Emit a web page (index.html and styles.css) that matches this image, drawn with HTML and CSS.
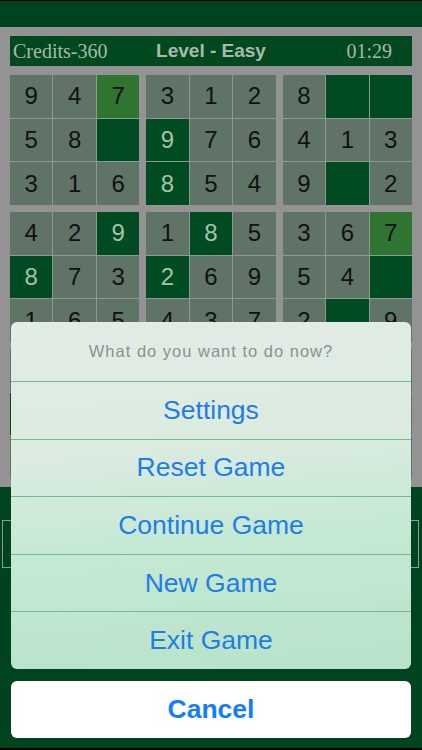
FILE: index.html
```html
<!DOCTYPE html>
<html lang="en">
<head>
  <meta charset="UTF-8">
  <meta name="viewport" content="width=device-width, initial-scale=1.0">
  <title>Sudoku</title>
  <link rel="stylesheet" href="styles.css">
</head>
<body>
  <div class="topbar"></div>

  <div class="board-area">
    <div class="status">
      <span class="credits">Credits-360</span>
      <span class="level">Level - Easy</span>
      <span class="timer">01:29</span>
    </div>
    <!-- Blocks are filled in by the script below -->
    <div class="board" id="board"></div>
  </div>

  <div class="controls">
    <div class="ctrl-btn"></div>
    <div class="ctrl-btn"></div>
  </div>

  <!-- Action sheet over the dimmed game -->
  <div class="sheet-wrap">
    <div class="sheet">
      <div class="sheet-title">What do you want to do now?</div>
      <button class="sheet-option">Settings</button>
      <button class="sheet-option">Reset Game</button>
      <button class="sheet-option">Continue Game</button>
      <button class="sheet-option">New Game</button>
      <button class="sheet-option">Exit Game</button>
    </div>
    <button class="sheet-cancel">Cancel</button>
  </div>

  <script>
    // 'g' = highlighted cell, 'd' = given (dark) cell
    // last row of blocks sits under the sheet, so it stays blank
    const blocks = [
      ['9', '4', 'g7', '5', '8', 'd', '3', '1', '6'],
      ['3', '1', '2', 'd9', '7', '6', 'd8', '5', '4'],
      ['8', 'd', 'd', '4', '1', '3', '9', 'd', '2'],
      ['4', '2', 'd9', 'd8', '7', '3', '1', '6', '5'],
      ['1', 'd8', '5', 'd2', '6', '9', '4', '3', '7'],
      ['3', '6', 'g7', '5', '4', 'd', '2', 'd', '9'],
      ['', '', '', 'd', '', '', '', '', ''],
      ['', '', '', '', 'd', '', '', '', ''],
      ['', '', '', '', '', '', 'd', '', '']
    ];

    const board = document.getElementById('board');
    blocks.forEach(cells => {
      const block = document.createElement('div');
      block.classList.add('block');
      cells.forEach(value => {
        const cell = document.createElement('div');
        cell.classList.add('cell');
        if (value[0] === 'g') cell.classList.add('highlight');
        if (value[0] === 'd') cell.classList.add('given');
        cell.textContent = value.replace(/[gd]/, '');
        block.appendChild(cell);
      });
      board.appendChild(block);
    });
  </script>
</body>
</html>
```

FILE: styles.css
```css
body {
  margin: 0;
  height: 750px;
  box-sizing: border-box;
  background-color: #00431f;
  border-top: 1px solid #000;
  border-bottom: 2px solid #000;
  font-family: "Liberation Sans", Arial, sans-serif;
  overflow: hidden;
  position: relative;
}

.topbar {
  height: 26px;
  background-color: #00431f;
}

.board-area {
  background-color: #939393;
  padding: 9px 10px 8px;
}

/* Credits / level / timer bar */
.status {
  height: 30px;
  background-color: #00491f;
  display: grid;
  grid-template-columns: 1fr auto 1fr;
  align-items: center;
  color: #a9b9ab;
}

.credits,
.timer {
  font-family: "Liberation Serif", "Times New Roman", serif;
  font-size: 20px;
}

.credits {
  padding-left: 3px;
}

.level {
  font-size: 19px;
  font-weight: bold;
}

.timer {
  text-align: right;
  padding-right: 20px;
}

.board {
  margin-top: 9px;
  display: grid;
  grid-template-columns: repeat(3, 1fr);
  gap: 7px;
}

.block {
  height: 130px;
  display: grid;
  grid-template-columns: repeat(3, 1fr);
  grid-template-rows: repeat(3, 1fr);
  gap: 1px;
  background-color: #8b9b91;
}

.cell {
  background-color: #5f7466;
  display: flex;
  align-items: center;
  justify-content: center;
  font-size: 24px;
  color: #111;
}

.cell.highlight {
  background-color: #2f7431;
}

.cell.given {
  background-color: #004b21;
  color: #a6c2ab;
}

.controls {
  display: flex;
  gap: 6px;
  padding: 33px 3px 0 2px;
}

.ctrl-btn {
  flex: 1;
  height: 46px;
  border: 1px solid #8c9a90;
}

/* Action sheet */
.sheet-wrap {
  position: absolute;
  top: 321px;
  left: 11px;
  right: 11px;
}

.sheet {
  border-radius: 6px;
  overflow: hidden;
  background: linear-gradient(175deg, #e2ece5 0%, #dcebe0 35%, #c4e9d4 62%, #b8e2c9 100%);
}

.sheet-title {
  height: 59px;
  display: flex;
  align-items: center;
  justify-content: center;
  font-size: 16.5px;
  letter-spacing: 1px;
  color: #8c918e;
}

.sheet-option,
.sheet-cancel {
  display: block;
  width: 100%;
  border: none;
  padding: 0;
  margin: 0;
  font-family: "Liberation Sans", Arial, sans-serif;
  font-size: 26.5px;
  cursor: pointer;
}

.sheet-option {
  box-sizing: border-box;
  height: 57.6px;
  background: none;
  border-top: 1px solid #74b98e;
  color: #1f7de6;
}

.sheet-cancel {
  margin-top: 12px;
  height: 57px;
  border-radius: 6px;
  background-color: #fff;
  color: #167ef5;
  font-weight: bold;
}
```
